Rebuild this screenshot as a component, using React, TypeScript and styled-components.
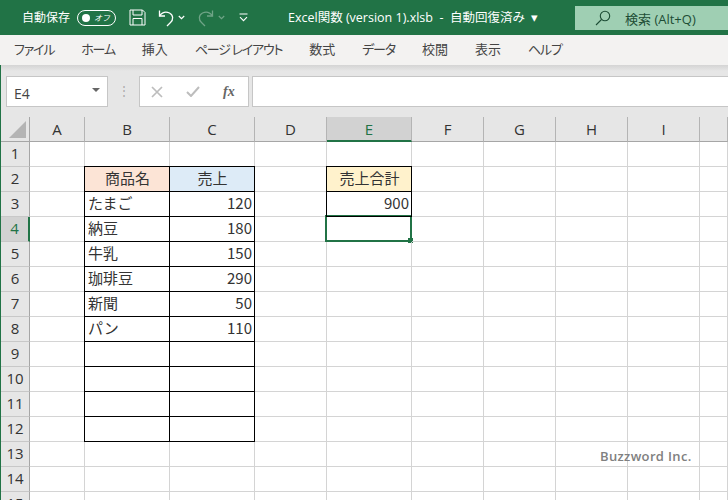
import React from 'react'
import styled, { createGlobalStyle } from 'styled-components'

const GREEN = '#217346'
const CJK = '"Noto Sans CJK JP", "Noto Sans", sans-serif'
const UI = '"Open Sans", "Noto Sans CJK JP", sans-serif'

const GlobalStyle = createGlobalStyle`
    html, body {
        margin: 0;
        padding: 0;
        width: 728px;
        height: 500px;
        overflow: hidden;
        background: #fff;
    }
    * {
        box-sizing: border-box;
    }
`

const Page = styled.div`
    position: relative;
    display: flex;
    flex-direction: column;
    width: 728px;
    height: 500px;
    overflow: hidden;
    font-family: ${CJK};
`

const TitleBar = styled.header`
    display: flex;
    align-items: center;
    height: 35px;
    flex: none;
    padding-left: 22px;
    background: ${GREEN};
    color: #fff;
`

const AutoSaveLabel = styled.span`
    font-size: 12px;
    line-height: 33px;
    margin-bottom: 2px;
`

const Toggle = styled.span`
    display: flex;
    align-items: center;
    justify-content: space-between;
    width: 39px;
    height: 16px;
    margin-left: 7px;
    padding: 0 5px 0 4px;
    border: 1px solid #fff;
    border-radius: 8px;
    font-size: 8px;
    font-style: italic;
    &::before {
        content: '';
        width: 8px;
        height: 8px;
        border-radius: 50%;
        background: #fff;
    }
`

const QatButton = styled.span<{ $gap: number; $dim?: boolean }>`
    display: flex;
    margin-left: ${p => p.$gap}px;
    opacity: ${p => (p.$dim ? 0.35 : 1)};
`

const FileTitle = styled.span`
    margin-left: 40px;
    margin-bottom: 2px;
    width: 287px;
    flex: none;
    font-family: ${UI};
    font-size: 12.5px;
    white-space: pre;
`

const SearchBox = styled.div`
    display: flex;
    align-items: center;
    flex: 1;
    height: 24px;
    margin-top: 1px;
    padding-left: 20px;
    background: #9fcfb3;
    color: #1d4d35;
    font-family: ${UI};
    font-size: 13px;
`

const SearchText = styled.span`
    margin-left: 14px;
`

const Ribbon = styled.nav`
    display: flex;
    align-items: center;
    gap: 27px;
    height: 30px;
    flex: none;
    padding: 0 0 3px 14px;
    background: #f3f2f1;
    color: #444;
    font-size: 13px;
    font-feature-settings: "palt";
    white-space: pre;
`

const Tab = styled.span<{ $kana?: boolean }>`
    letter-spacing: ${p => (p.$kana ? '-1.2px' : '0')};
`

const Workspace = styled.main`
    display: flex;
    flex-direction: column;
    flex: 1;
    min-height: 0;
    border-left: 1px solid ${GREEN};
`

const FormulaArea = styled.div`
    display: flex;
    height: 52px;
    flex: none;
    padding: 11px 0 10px 5px;
    background: linear-gradient(#d4d4d4, #e6e6e6 6px);
`

const NameBox = styled.div`
    display: flex;
    align-items: center;
    justify-content: space-between;
    width: 102px;
    padding: 3px 7px 0;
    background: #fff;
    border: 1px solid #c6c6c6;
    color: #444;
    font-family: ${UI};
    font-size: 14px;
`

const DropArrow = styled.span`
    width: 0;
    height: 0;
    border-left: 4px solid transparent;
    border-right: 4px solid transparent;
    border-top: 4px solid #666;
    margin-bottom: 6px;
`

const Grip = styled.span`
    width: 31px;
    text-align: center;
    color: #aaa;
    font-size: 12px;
    line-height: 28px;
`

const FormulaButtons = styled.div`
    display: flex;
    align-items: center;
    gap: 23px;
    width: 110px;
    padding-left: 11px;
    background: #fff;
    border: 1px solid #c6c6c6;
`

const FxLabel = styled.span`
    font-family: "Liberation Serif", serif;
    font-size: 14px;
    font-style: italic;
    font-weight: 700;
    color: #666;
`

const FormulaInput = styled.div`
    flex: 1;
    margin-left: 3px;
    background: #fff;
    border: 1px solid #c6c6c6;
    border-right: none;
`

const Sheet = styled.div`
    display: grid;
    grid-template-columns: 29px 55px 85px 85px 72px 85px 72px 72px 72px 72px 28px;
    grid-auto-rows: 25px;
    flex: none;
    background: #fff;
`

const Corner = styled.div`
    display: flex;
    align-items: flex-end;
    padding: 0 0 3px 8px;
    background: #e6e6e6;
    border-right: 1px solid #a6a6a6;
    border-bottom: 1px solid #a6a6a6;
`

const ColumnHeader = styled.div<{ $active?: boolean }>`
    display: flex;
    align-items: center;
    justify-content: center;
    background: ${p => (p.$active ? '#d2d2d2' : '#e6e6e6')};
    border-right: 1px solid #b4b4b4;
    border-bottom: ${p => (p.$active ? `2px solid ${GREEN}` : '1px solid #a6a6a6')};
    color: ${p => (p.$active ? GREEN : '#333')};
    font-family: ${UI};
    font-size: 15px;
`

const RowHeader = styled.div<{ $active?: boolean }>`
    display: flex;
    align-items: center;
    justify-content: center;
    padding-bottom: 2px;
    background: ${p => (p.$active ? '#d2d2d2' : '#e6e6e6')};
    border-right: ${p => (p.$active ? `2px solid ${GREEN}` : '1px solid #a6a6a6')};
    border-bottom: 1px solid #c8c8c8;
    color: ${p => (p.$active ? GREEN : '#333')};
    font-family: ${UI};
    font-size: 15px;
`

const Cell = styled.div<{ $boxed?: boolean; $fill?: string; $align?: string }>`
    position: relative;
    display: flex;
    align-items: center;
    justify-content: ${p => p.$align || 'flex-start'};
    padding: 0 2px 3px 3px;
    background: ${p => p.$fill || 'transparent'};
    border-right: 1px solid ${p => (p.$boxed ? '#000' : '#d4d4d4')};
    border-bottom: 1px solid ${p => (p.$boxed ? '#000' : '#d4d4d4')};
    box-shadow: ${p => (p.$boxed ? '-1px 0 0 #000, 0 -1px 0 #000, -1px -1px 0 #000' : 'none')};
    z-index: ${p => (p.$boxed ? 1 : 0)};
    color: #333;
    font-size: 15px;
    white-space: nowrap;
`

const Selection = styled.div`
    position: absolute;
    top: -2px;
    left: -2px;
    right: -1px;
    bottom: -1px;
    border: 2px solid ${GREEN};
    z-index: 2;
    &::after {
        content: '';
        position: absolute;
        right: -3px;
        bottom: -3px;
        width: 5px;
        height: 5px;
        background: ${GREEN};
    }
`

const Watermark = styled.div`
    position: absolute;
    top: 447px;
    left: 600px;
    z-index: 3;
    color: #808080;
    font-family: "Open Sans", sans-serif;
    font-size: 13px;
    font-weight: 600;
    letter-spacing: 0.35px;
`

const COLUMNS = ['A', 'B', 'C', 'D', 'E', 'F', 'G', 'H', 'I', '']
const TABS = [
    { label: 'ファイル', kana: true },
    { label: 'ホーム', kana: true },
    { label: '挿入' },
    { label: 'ページ レイアウト', kana: true },
    { label: '数式' },
    { label: 'データ', kana: true },
    { label: '校閲' },
    { label: '表示' },
    { label: 'ヘルプ', kana: true },
]

const CELLS: Record<string, string> = {
    B2: '商品名', C2: '売上', E2: '売上合計',
    B3: 'たまご', C3: '120', E3: '900',
    B4: '納豆', C4: '180',
    B5: '牛乳', C5: '150',
    B6: '珈琲豆', C6: '290',
    B7: '新聞', C7: '50',
    B8: 'パン', C8: '110',
}

const FILLS: Record<string, string> = {
    B2: '#fce4d6',
    C2: '#ddebf7',
    E2: '#fff2cc',
}

const isBoxed = (col: string, row: number) =>
    ((col === 'B' || col === 'C') && row >= 2 && row <= 12) || (col === 'E' && (row === 2 || row === 3))

const alignOf = (col: string, row: number) => {
    if (row === 2) return 'center'
    return col === 'C' || col === 'E' ? 'flex-end' : 'flex-start'
}

const SaveIcon = () => (
    <svg width="17" height="17" viewBox="0 0 17 17" fill="none" stroke="#fff" strokeWidth="1">
        <path d="M1 1h12.5L16 3.5V16H1z" />
        <path d="M4 1v5h9V1M4 16v-6.5h9V16" />
    </svg>
)

const UndoIcon = () => (
    <svg width="17" height="18" viewBox="0 0 17 18" fill="none" stroke="#fff" strokeWidth="1.3">
        <path d="M1.5 1.5v5.5h5.5" />
        <path d="M1.5 7C4 3.5 8 2.5 11.5 4c4 2 4 7 1 9.5L9 17" />
    </svg>
)

const RedoIcon = () => (
    <svg width="17" height="18" viewBox="0 0 17 18" fill="none" stroke="#fff" strokeWidth="1.3">
        <path d="M15.5 1.5v5.5H10" />
        <path d="M15.5 7C13 3.5 9 2.5 5.5 4c-4 2-4 7-1 9.5L8 17" />
    </svg>
)

const Caret = () => (
    <svg width="7" height="5" viewBox="0 0 7 5" fill="none" stroke="#fff" strokeWidth="1.2">
        <path d="M.8 1l2.7 2.7L6.2 1" />
    </svg>
)

const QatMenuIcon = () => (
    <svg width="9" height="9" viewBox="0 0 9 9" fill="none" stroke="#fff" strokeWidth="1.1">
        <path d="M.5 1h8M1 4.2l3.5 3.5L8 4.2" />
    </svg>
)

const SearchIcon = () => (
    <svg width="16" height="16" viewBox="0 0 16 16" fill="none" stroke="#1d4d35" strokeWidth="1.1">
        <circle cx="10" cy="6" r="4.7" />
        <path d="M6.5 9.5L1 15" />
    </svg>
)

const CrossIcon = () => (
    <svg width="12" height="12" viewBox="0 0 12 12" fill="none" stroke="#bdbdbd" strokeWidth="1.7">
        <path d="M1 1l10 10M11 1L1 11" />
    </svg>
)

const CheckIcon = () => (
    <svg width="14" height="11" viewBox="0 0 14 11" fill="none" stroke="#bdbdbd" strokeWidth="2">
        <path d="M1 6l4 4 8-9" />
    </svg>
)

const CornerTriangle = () => (
    <svg width="17" height="17" viewBox="0 0 17 17">
        <path d="M17 0v17H0z" fill="#b4b4b4" />
    </svg>
)

const App = () => {
    const rows = Array.from({ length: 15 }, (_, i) => i + 1)

    return (
        <Page>
            <GlobalStyle />
            <TitleBar>
                <AutoSaveLabel>自動保存</AutoSaveLabel>
                <Toggle>オフ</Toggle>
                <QatButton $gap={13}><SaveIcon /></QatButton>
                <QatButton $gap={12}><UndoIcon /></QatButton>
                <QatButton $gap={3}><Caret /></QatButton>
                <QatButton $gap={12} $dim><RedoIcon /></QatButton>
                <QatButton $gap={4} $dim><Caret /></QatButton>
                <QatButton $gap={14}><QatMenuIcon /></QatButton>
                <FileTitle>Excel関数 (version 1).xlsb  -  自動回復済み  ▾</FileTitle>
                <SearchBox>
                    <SearchIcon />
                    <SearchText>検索 (Alt+Q)</SearchText>
                </SearchBox>
            </TitleBar>
            <Ribbon>
                {TABS.map(tab => <Tab key={tab.label} $kana={tab.kana}>{tab.label}</Tab>)}
            </Ribbon>
            <Workspace>
                <FormulaArea>
                    <NameBox>
                        E4
                        <DropArrow />
                    </NameBox>
                    <Grip>⋮</Grip>
                    <FormulaButtons>
                        <CrossIcon />
                        <CheckIcon />
                        <FxLabel>fx</FxLabel>
                    </FormulaButtons>
                    <FormulaInput />
                </FormulaArea>
                <Sheet>
                    <Corner><CornerTriangle /></Corner>
                    {COLUMNS.map(col => (
                        <ColumnHeader key={col} $active={col === 'E'}>{col}</ColumnHeader>
                    ))}
                    {rows.map(row => (
                        <React.Fragment key={row}>
                            <RowHeader $active={row === 4}>{row}</RowHeader>
                            {COLUMNS.map(col => {
                                const id = `${col}${row}`
                                return (
                                    <Cell
                                        key={id}
                                        $boxed={isBoxed(col, row)}
                                        $fill={FILLS[id]}
                                        $align={alignOf(col, row)}
                                    >
                                        {CELLS[id]}
                                        {id === 'E4' && <Selection />}
                                    </Cell>
                                )
                            })}
                        </React.Fragment>
                    ))}
                </Sheet>
            </Workspace>
            <Watermark>Buzzword Inc.</Watermark>
        </Page>
    )
}

export default App
